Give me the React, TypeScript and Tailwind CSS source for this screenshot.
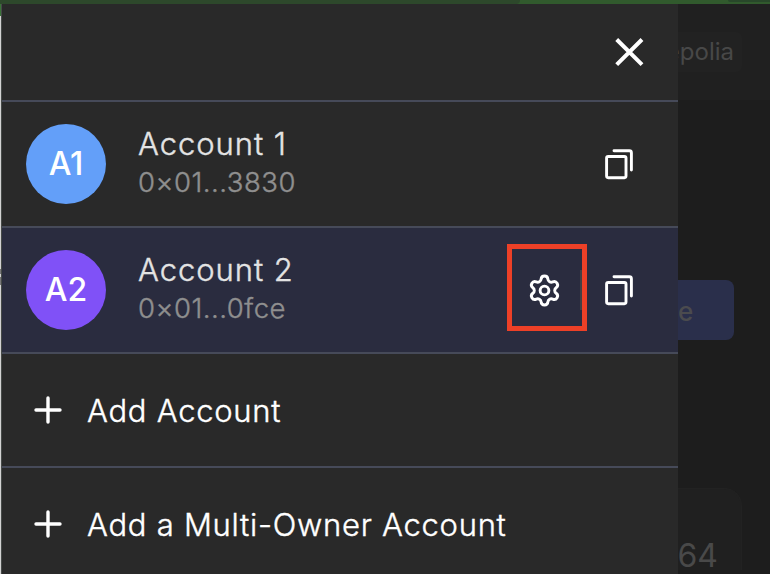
import type { ReactNode } from "react";

function CopyIcon() {
  return (
    <svg className="block h-8 w-8" viewBox="0 0 32 32" fill="none" stroke="white" strokeWidth="2.9" strokeLinecap="round" strokeLinejoin="round">
      <rect x="3.6" y="8.5" width="19.4" height="21.2" rx="1.6" />
      <path d="M11 2.7H26.4Q28.4 2.7 28.4 4.7V22" />
    </svg>
  );
}

function GearIcon() {
  return (
    <svg className="block h-[35px] w-[35px]" viewBox="0 0 24 24" fill="none" stroke="white" strokeWidth="2" strokeLinecap="round" strokeLinejoin="round">
      <path d="M9.671 4.136a2.34 2.34 0 0 1 4.659 0 2.34 2.34 0 0 0 3.319 1.915 2.34 2.34 0 0 1 2.33 4.033 2.34 2.34 0 0 0 0 3.831 2.34 2.34 0 0 1-2.33 4.033 2.34 2.34 0 0 0-3.319 1.915 2.34 2.34 0 0 1-4.659 0 2.34 2.34 0 0 0-3.32-1.915 2.34 2.34 0 0 1-2.33-4.033 2.34 2.34 0 0 0 0-3.831A2.34 2.34 0 0 1 6.35 6.051a2.34 2.34 0 0 0 3.319-1.915" />
      <circle cx="12" cy="12" r="3" />
    </svg>
  );
}

function AccountRow({ initials, avatar, row, name, address, children }: { initials: string; avatar: string; row: string; name: string; address: string; children?: ReactNode }) {
  return (
    <div className={`flex h-[126px] shrink-0 items-center border-b-2 border-[#464a59] pl-6 ${row}`}>
      <div className={`flex h-20 w-20 items-center justify-center rounded-full text-[32px] font-medium text-white ${avatar}`}>{initials}</div>
      <div className="ml-8 flex flex-col pb-[4px]">
        <div className="h-[38px] text-[31px] font-light leading-[38px] tracking-[0.95px] text-[#e3e3e3] [-webkit-text-stroke:0.4px_#e3e3e3]">{name}</div>
        <div className="h-9 text-[27.5px] font-light leading-[38px] tracking-[0.5px] text-[#8f8f8f] [-webkit-text-stroke:0.4px_#8f8f8f]">{address}</div>
      </div>
      <div className="ml-auto flex items-center">
        {children}
        <div className="mr-[43px]">
          <CopyIcon />
        </div>
      </div>
    </div>
  );
}

function AddRow({ label }: { label: string }) {
  return (
    <div className="flex h-[114px] shrink-0 items-center border-b-2 border-[#464a59] pl-[30px] text-[31px] text-white">
      <svg className="block h-8 w-8" viewBox="0 0 32 32" stroke="white" strokeWidth="3.4" strokeLinecap="round">
        <path d="M16 4V28M4 16H28" />
      </svg>
      <span className="ml-[23px] pt-[2px] font-light tracking-[0.73px] [-webkit-text-stroke:0.4px_white]">{label}</span>
    </div>
  );
}

export default function App() {
  return (
    <div className="relative h-[574px] w-[770px] overflow-hidden bg-[#1d1d1d] font-['Inter','Liberation_Sans',sans-serif]">
      <div className="flex h-1 w-full justify-between bg-[#315a2d]">
        <div className="w-[520px] rounded-br bg-[#2d482b]" />
        <div className="h-0.5 w-[42px] rounded-bl bg-[#28472a]" />
      </div>
      <div className="flex h-[570px]">
        <div className="w-0.5 shrink-0 border-r border-[#464a48] bg-[#d2d2d2]">
          <div className="h-3 bg-[#397337]" />
          <div className="mt-[253px] h-[5px] bg-[#777]" />
          <div className="mt-[3px] h-2 bg-[#777]" />
        </div>
        <aside className="flex w-[676px] shrink-0 flex-col overflow-hidden bg-[#292929]">
          <div className="flex h-[98px] shrink-0 items-center justify-end border-b-2 border-[#464a59] pr-[33px]">
            <svg className="block h-8 w-8" viewBox="0 0 32 32" stroke="white" strokeWidth="4">
              <path d="M3.7 3.5L29 28.7M29 3.5L3.7 28.7" />
            </svg>
          </div>
          <AccountRow initials="A1" avatar="bg-[#639ff9]" row="" name="Account 1" address="0×01...3830" />
          <AccountRow initials="A2" avatar="bg-[#8051f7]" row="bg-[#2a2c3f]" name="Account 2" address="0×01...0fce">
            <div className="mr-4 -mt-[5px] flex h-[87px] w-20 items-center justify-end border-[5px] border-[#ed4027] pt-[5px]">
              <GearIcon />
              <div className="ml-[18px] h-10 w-0.5 bg-[#414145]" />
            </div>
          </AccountRow>
          <AddRow label="Add Account" />
          <AddRow label="Add a Multi-Owner Account" />
        </aside>
        <div className="flex w-[92px] flex-col">
          <div className="h-24 shrink-0 bg-[#202020] pt-7">
            <div className="flex h-10 w-16 justify-end rounded-r-md bg-[#222222] pr-2 text-[24px] leading-10 text-[#484848]">
              <div className="flex w-14 justify-end overflow-hidden">epolia</div>
            </div>
          </div>
          <div className="mt-[180px] flex h-[60px] w-14 shrink-0 items-center rounded-r-lg bg-[#2a2f4b] pt-0.5 text-[26px] font-medium text-[#4b4b4e]">e</div>
          <div className="mt-[148px] flex h-[82px] w-16 shrink-0 justify-end rounded-tr-[18px] border-r border-t border-[#222] bg-[#202020] pr-[23px] pt-[48px] text-[32px] leading-[38px] text-[#494949]">64</div>
        </div>
      </div>
    </div>
  );
}
